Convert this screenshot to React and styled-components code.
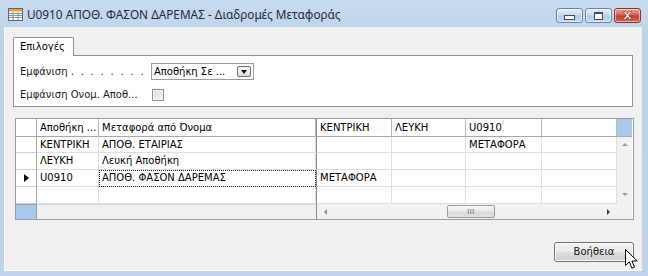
import React from "react";
import styled, { createGlobalStyle } from "styled-components";

const GlobalStyle = createGlobalStyle`
  html, body {
    margin: 0;
    padding: 0;
    overflow: hidden;
    background: #bfd4ec;
  }
`;

const UI_FONT = `"DejaVu Sans", "Liberation Sans", sans-serif`;

const columns = [
  { title: "Αποθήκη ...", width: 62 },
  { title: "Μεταφορά από Όνομα", width: 217 },
  { title: "ΚΕΝΤΡΙΚΗ", width: 76, split: true },
  { title: "ΛΕΥΚΗ", width: 74 },
  { title: "U0910", width: 76 },
  { title: "", width: 75 },
];

const rows = [
  ["ΚΕΝΤΡΙΚΗ", "ΑΠΟΘ. ΕΤΑΙΡΙΑΣ", "", "", "ΜΕΤΑΦΟΡΑ", ""],
  ["ΛΕΥΚΗ", "Λευκή Αποθήκη", "", "", "", ""],
  ["U0910", "ΑΠΟΘ. ΦΑΣΟΝ ΔΑΡΕΜΑΣ", "ΜΕΤΑΦΟΡΑ", "", "", ""],
  ["", "", "", "", "", ""],
];
const CURRENT_ROW = 2;

const App = () => {
  return (
    <>
      <GlobalStyle />
      <SWindow>
        <STitleBar>
          <TitleIcon />
          <STitle>U0910 ΑΠΟΘ. ΦΑΣΟΝ ΔΑΡΕΜΑΣ - Διαδρομές Μεταφοράς</STitle>
          <SCaptionButtons>
            <SCaptionButton>
              <SMinGlyph />
            </SCaptionButton>
            <SCaptionButton>
              <SMaxGlyph />
            </SCaptionButton>
            <SCaptionButton close>
              <CloseGlyph />
            </SCaptionButton>
          </SCaptionButtons>
        </STitleBar>

        <SClient>
          <STabStrip>
            <STab>Επιλογές</STab>
          </STabStrip>
          <SPanel>
            <SOptionRow>
              <SLabel>
                Εμφάνιση <SDots>. . . . . . . .</SDots>
              </SLabel>
              <SSelect>
                <span>Αποθήκη Σε ...</span>
                <SSelectButton>
                  <SDownArrow />
                </SSelectButton>
              </SSelect>
            </SOptionRow>
            <SOptionRow>
              <SLabel>Εμφάνιση Ονομ. Αποθ...</SLabel>
              <SCheckbox />
            </SOptionRow>
          </SPanel>

          {/* data grid */}
          <SGrid>
            <SRowHeader head />
            {columns.map((c) => (
              <SHeadCell key={c.title || "blank"} split={c.split}>
                {c.title}
              </SHeadCell>
            ))}
            <SCorner />

            {rows.map((r, i) => (
              <React.Fragment key={i}>
                <SRowHeader>{i === CURRENT_ROW && <SRowMarker />}</SRowHeader>
                {r.map((v, j) => (
                  <SCell
                    key={j}
                    split={columns[j].split}
                    focus={i === CURRENT_ROW && j === 1}
                  >
                    {v}
                  </SCell>
                ))}
                {i === 0 && (
                  <SVScroll>
                    <SScrollArrow dir="up" />
                    <SScrollArrow dir="down" />
                  </SVScroll>
                )}
              </React.Fragment>
            ))}

            <SCorner bottom />
            <SFrozenFoot />
            <SHScroll>
              <SScrollArrow dir="left" />
              <SThumb>III</SThumb>
              <SScrollArrow dir="right" dark />
            </SHScroll>
            <SScrollEnd />
          </SGrid>

          <SFooter>
            <SButton>Βοήθεια</SButton>
            <Cursor />
          </SFooter>
        </SClient>
      </SWindow>
    </>
  );
};

const TitleIcon = () => (
  <svg width="15" height="13" viewBox="0 0 15 13">
    <rect x="0.5" y="0.5" width="14" height="12" fill="#fdfdfd" stroke="#56657c" />
    <rect x="1" y="1" width="13" height="2.5" fill="#e2a636" />
    <path d="M1 5.5h13M1 7.5h13M1 9.5h13M5 4v8M10 4v8" stroke="#8592a8" strokeWidth="1" />
  </svg>
);

const CloseGlyph = () => (
  <svg width="11" height="9" viewBox="0 0 11 9">
    <path
      d="M1 0.5h2.2l2.3 2.6 2.3-2.6h2.2l-3.4 4 3.4 4h-2.2l-2.3-2.6-2.3 2.6h-2.2l3.4-4z"
      fill="#fff"
      stroke="#7a2a20"
      strokeWidth="0.6"
    />
  </svg>
);

const Cursor = () => (
  <SCursor width="13" height="21" viewBox="0 0 13 21">
    <path
      d="M0.5 0.5v16l3.8-3.6 2.6 6.2 2.6-1.1-2.6-6h5.3z"
      fill="#fff"
      stroke="#000"
      strokeWidth="1"
      strokeLinejoin="round"
    />
  </SCursor>
);

const SWindow = styled.div`
  width: 648px;
  height: 276px;
  box-sizing: border-box;
  display: flex;
  flex-direction: column;
  background: linear-gradient(#c9dbef, #bcd2ec 40px, #bfd4ec);
  padding: 0 6px 5px 4px;
  font-family: ${UI_FONT};
`;

const STitleBar = styled.div`
  height: 27px;
  flex: none;
  display: flex;
  align-items: flex-start;
  padding: 8px 0 0 4px;
  box-sizing: border-box;

  svg {
    flex: none;
  }
`;

const STitle = styled.div`
  margin-left: 4px;
  margin-top: -2px;
  font-family: "Noto Sans", "Open Sans", sans-serif;
  font-size: 11.8px;
  line-height: 16px;
  color: #1e2a3a;
  white-space: nowrap;
`;

const SCaptionButtons = styled.div`
  margin-left: auto;
  display: flex;
  gap: 2px;
  margin-right: 1px;
`;

const SCaptionButton = styled.div`
  width: 27px;
  height: 15px;
  box-sizing: border-box;
  border: 1px solid ${(p) => (p.close ? "#7d3a30" : "#6d83a3")};
  border-radius: 3px;
  display: flex;
  align-items: center;
  justify-content: center;
  background: ${(p) =>
    p.close
      ? "linear-gradient(#e9a99c, #d4634f 45%, #c0402c 55%, #d16a52)"
      : "linear-gradient(#e4eef9, #c9dbef 45%, #b3cbe8 55%, #c6dbf1)"};
  box-shadow: inset 0 0 0 1px rgba(255, 255, 255, 0.5);
`;

const SMinGlyph = styled.div`
  width: 9px;
  height: 3px;
  margin-top: 4px;
  background: #fff;
  border: 1px solid #3b4d66;
`;

const SMaxGlyph = styled.div`
  width: 7px;
  height: 5px;
  border: 1px solid #3b4d66;
  border-top-width: 2px;
  background: #fff;
  box-shadow: inset 0 0 0 1px #fff;
`;

const SClient = styled.div`
  flex: 1;
  display: flex;
  flex-direction: column;
  background: #f0f0f0;
  border-left: 1px solid #fbfcfe;
  border-bottom: 1px solid #fbfcfe;
  padding: 10px 9px 0 8px;
  font-size: 10px;
  color: #000;
`;

const STabStrip = styled.div`
  display: flex;
  height: 18px;
  position: relative;
  z-index: 1;
`;

const STab = styled.div`
  width: 61px;
  height: 19px;
  box-sizing: border-box;
  border: 1px solid #8d9099;
  border-bottom: none;
  border-radius: 2px 2px 0 0;
  background: #fff;
  padding-left: 6px;
  line-height: 18px;
`;

const SPanel = styled.div`
  height: 52px;
  box-sizing: border-box;
  border: 1px solid #8d9099;
  background: #fff;
  padding: 7px 6px 0 6px;
  display: flex;
  flex-direction: column;
  gap: 6px;
`;

const SOptionRow = styled.div`
  display: flex;
  align-items: center;
  height: 17px;
`;

const SLabel = styled.div`
  width: 131px;
  flex: none;
  white-space: nowrap;
  color: #1a1a1a;
`;

const SDots = styled.span`
  word-spacing: 3.6px;
`;

const SSelect = styled.div`
  width: 103px;
  height: 17px;
  box-sizing: border-box;
  border: 1px solid #9c9c9c;
  background: #fff;
  display: flex;
  align-items: center;
  justify-content: space-between;
  padding: 0 2px 0 2px;
`;

const SSelectButton = styled.div`
  width: 14px;
  height: 11px;
  box-sizing: border-box;
  border: 1px solid #6f6f6f;
  border-radius: 2px;
  background: linear-gradient(#fbfbfb, #dedede);
  display: flex;
  align-items: center;
  justify-content: center;
`;

const SDownArrow = styled.div`
  width: 0;
  height: 0;
  border-left: 3.5px solid transparent;
  border-right: 3.5px solid transparent;
  border-top: 4px solid #111;
`;

const SCheckbox = styled.div`
  width: 12px;
  height: 12px;
  margin-left: 1px;
  box-sizing: border-box;
  border: 1px solid #8e8f8f;
  background: linear-gradient(135deg, #dcdcdc, #f6f6f6);
  box-shadow: inset 0 0 0 1px #f4f4f4;
`;

const SGrid = styled.div`
  margin: 11px -1px 0 2px;
  border: 1px solid #9a9a9a;
  display: grid;
  grid-template-columns: 21px ${columns.map((c) => `${c.width}px`).join(" ")} 15px;
  grid-template-rows: 18px 16px 17px 17px 17px 15px;
  background: #fff;
`;

const cellBase = `
  box-sizing: border-box;
  overflow: hidden;
  white-space: nowrap;
  padding-left: 3px;
  line-height: 16px;
`;

const SHeadCell = styled.div`
  ${cellBase}
  border-right: 1px solid #b7b7b7;
  border-bottom: 1px solid #a8a8a8;
  border-left: ${(p) => (p.split ? "1px solid #8a8a8a" : "none")};
  line-height: 17px;
`;

const SCell = styled.div`
  ${cellBase}
  border-right: 1px solid #dedede;
  border-bottom: 1px solid #dedede;
  border-left: ${(p) => (p.split ? "1px solid #8a8a8a" : "none")};
  outline: ${(p) => (p.focus ? "1px dotted #222" : "none")};
  outline-offset: -1px;
`;

const SRowHeader = styled.div`
  box-sizing: border-box;
  border-right: 1px solid #a8a8a8;
  border-bottom: 1px solid ${(p) => (p.head ? "#a8a8a8" : "#cfcfcf")};
  display: flex;
  align-items: center;
  padding-left: 8px;
`;

const SRowMarker = styled.div`
  width: 0;
  height: 0;
  border-top: 4.5px solid transparent;
  border-bottom: 4.5px solid transparent;
  border-left: 5px solid #000;
`;

const SCorner = styled.div`
  background: #a9c8ee;
  box-sizing: border-box;
  border-bottom: ${(p) => (p.bottom ? "none" : "1px solid #a8a8a8")};
  border-right: ${(p) => (p.bottom ? "1px solid #9a9a9a" : "none")};
  border-top: ${(p) => (p.bottom ? "1px solid #9a9a9a" : "none")};
`;

const SVScroll = styled.div`
  grid-row: 2 / span 4;
  grid-column: 8;
  background: #f1f1f1;
  display: flex;
  flex-direction: column;
  align-items: center;
  justify-content: space-between;
  padding: 6px 0 8px;
  box-sizing: border-box;
`;

const SFrozenFoot = styled.div`
  grid-column: 2 / span 2;
  background: #f0f0f0;
  border-top: 1px solid #d8d8d8;
`;

const SHScroll = styled.div`
  grid-column: 4 / span 4;
  background: #f1f1f1;
  border-left: 1px solid #8a8a8a;
  display: flex;
  align-items: center;
  justify-content: space-between;
  padding: 0 7px 0 7px;
  position: relative;
`;

const SThumb = styled.div`
  width: 48px;
  height: 13px;
  box-sizing: border-box;
  margin-left: 8px;
  border: 1px solid #9b9b9b;
  border-radius: 2px;
  background: linear-gradient(#fafafa, #e6e6e6 50%, #d9d9d9 51%, #e3e3e3);
  font-size: 7px;
  letter-spacing: 0.5px;
  line-height: 11px;
  text-align: center;
  color: #555;
  font-family: "Liberation Sans", sans-serif;
`;

const SScrollEnd = styled.div`
  background: #f1f1f1;
`;

const arrowShapes = {
  up: "border-left: 3px solid transparent; border-right: 3px solid transparent; border-bottom: 3px solid #9a9a9a;",
  down: "border-left: 3px solid transparent; border-right: 3px solid transparent; border-top: 3px solid #9a9a9a;",
  left: "border-top: 3.5px solid transparent; border-bottom: 3.5px solid transparent; border-right: 3px solid #8a8a8a;",
  right:
    "border-top: 3.5px solid transparent; border-bottom: 3.5px solid transparent; border-left: 3px solid #3a3a3a;",
};

const SScrollArrow = styled.div`
  width: 0;
  height: 0;
  ${(p) => arrowShapes[p.dir]}
`;

const SFooter = styled.div`
  display: flex;
  justify-content: flex-end;
  margin: 22px -1px 0 0;
  position: relative;
`;

const SButton = styled.div`
  width: 80px;
  height: 20px;
  box-sizing: border-box;
  border: 1px solid #707070;
  border-radius: 3px;
  background: linear-gradient(#f2f2f2, #ebebeb 50%, #dddddd 51%, #cfcfcf);
  box-shadow: inset 0 0 0 1px #fcfcfc;
  text-align: center;
  line-height: 18px;
  color: #111;
`;

const SCursor = styled.svg`
  position: absolute;
  right: -4px;
  top: 7px;
`;

export default App;
